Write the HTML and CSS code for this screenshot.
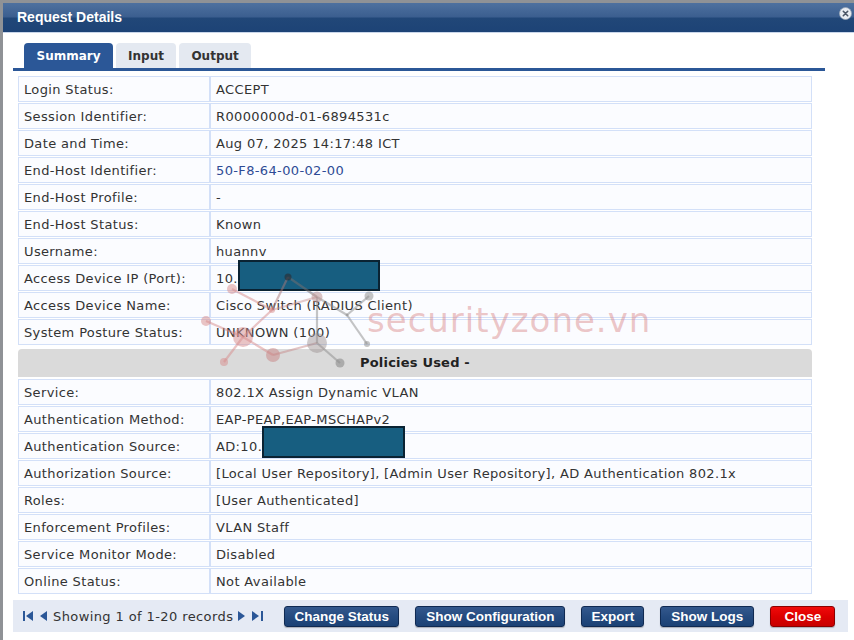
FILE: index.html
```html
<!DOCTYPE html>
<html>
<head>
<meta charset="utf-8">
<link rel="stylesheet" href="styles.css">
</head>
<body>
<div class="dialog">
  <div class="titlebar">
    <span class="title">Request Details</span>
    <svg class="close-x" width="13" height="13" viewBox="0 0 13 13"><circle cx="6.5" cy="6.5" r="6" fill="#e8ecf2" stroke="#9aa7b8" stroke-width="0.8"/><path d="M4.3 4.3 L8.7 8.7 M8.7 4.3 L4.3 8.7" stroke="#4a5566" stroke-width="1.6" stroke-linecap="round"/></svg>
  </div>
  <div class="tabs">
    <div class="tab active">Summary</div>
    <div class="tab">Input</div>
    <div class="tab">Output</div>
  </div>
  <div class="rule"></div>
  <div class="details">
    <div class="row"><div class="k">Login Status:</div><div class="v">ACCEPT</div></div>
    <div class="row"><div class="k">Session Identifier:</div><div class="v">R0000000d-01-6894531c</div></div>
    <div class="row"><div class="k">Date and Time:</div><div class="v">Aug 07, 2025 14:17:48 ICT</div></div>
    <div class="row"><div class="k">End-Host Identifier:</div><div class="v link">50-F8-64-00-02-00</div></div>
    <div class="row"><div class="k">End-Host Profile:</div><div class="v">-</div></div>
    <div class="row"><div class="k">End-Host Status:</div><div class="v">Known</div></div>
    <div class="row"><div class="k">Username:</div><div class="v">huannv</div></div>
    <div class="row"><div class="k">Access Device IP (Port):</div><div class="v">10.</div></div>
    <div class="row"><div class="k">Access Device Name:</div><div class="v">Cisco Switch (RADIUS Client)</div></div>
    <div class="row"><div class="k">System Posture Status:</div><div class="v">UNKNOWN (100)</div></div>
    <div class="section">Policies Used -</div>
    <div class="row"><div class="k">Service:</div><div class="v">802.1X Assign Dynamic VLAN</div></div>
    <div class="row"><div class="k">Authentication Method:</div><div class="v">EAP-PEAP,EAP-MSCHAPv2</div></div>
    <div class="row"><div class="k">Authentication Source:</div><div class="v">AD:10.</div></div>
    <div class="row"><div class="k">Authorization Source:</div><div class="v">[Local User Repository], [Admin User Repository], AD Authentication 802.1x</div></div>
    <div class="row"><div class="k">Roles:</div><div class="v">[User Authenticated]</div></div>
    <div class="row"><div class="k">Enforcement Profiles:</div><div class="v">VLAN Staff</div></div>
    <div class="row"><div class="k">Service Monitor Mode:</div><div class="v">Disabled</div></div>
    <div class="row"><div class="k">Online Status:</div><div class="v">Not Available</div></div>
  </div>
  <div class="footer">
    <div class="pager">
      <svg class="pg first" width="11" height="10" viewBox="0 0 11 10"><rect x="0" y="0" width="2" height="10" fill="#2b5797"/><path d="M10 0 L3 5 L10 10 Z" fill="#2b5797"/></svg>
      <svg class="pg prev" width="7" height="10" viewBox="0 0 7 10"><path d="M7 0 L0 5 L7 10 Z" fill="#2b5797"/></svg>
      <span class="pg-text">Showing 1 of 1-20 records</span>
      <svg class="pg next" width="7" height="10" viewBox="0 0 7 10"><path d="M0 0 L7 5 L0 10 Z" fill="#2b5797"/></svg>
      <svg class="pg last" width="11" height="10" viewBox="0 0 11 10"><path d="M0 0 L7 5 L0 10 Z" fill="#2b5797"/><rect x="9" y="0" width="2" height="10" fill="#2b5797"/></svg>
    </div>
    <div class="buttons">
      <button class="btn b-status">Change Status</button>
      <button class="btn b-config">Show Configuration</button>
      <button class="btn b-export">Export</button>
      <button class="btn b-logs">Show Logs</button>
      <button class="btn btn-red">Close</button>
    </div>
  </div>

  <div class="mask mask-ip"></div>
  <div class="mask mask-ad"></div>
  <svg class="wm-graph" width="200" height="130" viewBox="190 250 200 130">
    <g stroke-width="2.2" fill="none">
      <line x1="288" y1="277" x2="317" y2="297" stroke="rgba(120,110,110,0.5)"/>
      <line x1="288" y1="277" x2="272" y2="310" stroke="rgba(170,120,120,0.5)"/>
      <line x1="272" y1="310" x2="243" y2="337" stroke="rgba(215,140,140,0.5)"/>
      <line x1="232" y1="289" x2="272" y2="310" stroke="rgba(215,140,140,0.5)"/>
      <line x1="272" y1="310" x2="317" y2="297" stroke="rgba(200,140,140,0.45)"/>
      <line x1="206" y1="321" x2="243" y2="337" stroke="rgba(215,140,140,0.5)"/>
      <line x1="243" y1="337" x2="273" y2="355" stroke="rgba(215,140,140,0.5)"/>
      <line x1="243" y1="337" x2="224" y2="362" stroke="rgba(215,140,140,0.5)"/>
      <line x1="273" y1="355" x2="317" y2="343" stroke="rgba(200,140,140,0.5)"/>
      <line x1="317" y1="297" x2="317" y2="343" stroke="rgba(140,140,140,0.5)"/>
      <line x1="317" y1="343" x2="340" y2="363" stroke="rgba(140,140,140,0.5)"/>
      <line x1="317" y1="297" x2="347" y2="315" stroke="rgba(140,140,140,0.5)"/>
      <line x1="347" y1="315" x2="369" y2="296" stroke="rgba(140,140,140,0.5)"/>
      <line x1="347" y1="315" x2="367" y2="344" stroke="rgba(140,140,140,0.5)"/>
    </g>
    <g>
      <circle cx="288" cy="277" r="3.5" fill="rgba(40,50,60,0.7)"/>
      <circle cx="232" cy="289" r="5" fill="rgba(215,140,140,0.5)"/>
      <circle cx="317" cy="297" r="5.5" fill="rgba(190,150,150,0.55)"/>
      <circle cx="369" cy="296" r="4.5" fill="rgba(140,140,140,0.5)"/>
      <circle cx="206" cy="321" r="5" fill="rgba(215,140,140,0.5)"/>
      <circle cx="272" cy="310" r="3" fill="rgba(215,140,140,0.5)"/>
      <circle cx="347" cy="315" r="1.5" fill="rgba(140,140,140,0.5)"/>
      <circle cx="243" cy="337" r="10" fill="rgba(215,140,140,0.5)"/>
      <circle cx="317" cy="343" r="10" fill="rgba(150,140,140,0.45)"/>
      <circle cx="273" cy="355" r="7" fill="rgba(200,130,130,0.5)"/>
      <circle cx="340" cy="363" r="4.5" fill="rgba(140,140,140,0.6)"/>
      <circle cx="224" cy="362" r="4" fill="rgba(215,140,140,0.5)"/>
      <circle cx="367" cy="344" r="3" fill="rgba(140,140,140,0.5)"/>
    </g>
  </svg>
  <div class="wm-text">securityzone.vn</div>
</div>
</body>
</html>
```

FILE: styles.css
```css
html, body {
  margin: 0;
  padding: 0;
}
body {
  background: #8f9296;
  width: 854px;
  height: 640px;
  overflow: hidden;
  font-family: "DejaVu Sans", Verdana, sans-serif;
  font-size: 13px;
  color: #333;
}
.dialog {
  position: relative;
  margin: 3px 0 0 3px;
  width: 851px;
  height: 637px;
  background: #fff;
  overflow: hidden;
}
.titlebar {
  height: 29px;
  display: flex;
  align-items: center;
  justify-content: space-between;
  padding: 0 2px 0 14px;
  background: linear-gradient(#4e719f 0%, #3b5e8f 48%, #214778 52%, #1d4376 100%);
  border-bottom: 1px solid #c9d6ea;
}
.title {
  font-family: "Liberation Sans", Arial, sans-serif;
  font-weight: bold;
  font-size: 14px;
  color: #fff;
  margin-top: -1px;
}
.close-x {
  margin-top: -8px;
}
.tabs {
  display: flex;
  gap: 2.5px;
  margin: 10px 0 0 21px;
  height: 25px;
}
.tab {
  height: 25px;
  line-height: 27px;
  padding: 0 12.5px;
  font-size: 12px;
  font-weight: bold;
  color: #333;
  background: #e4e9f1;
  border-radius: 4px 4px 0 0;
  box-sizing: border-box;
}
.tab.active {
  background: #2b5797;
  color: #fff;
}
.rule {
  height: 3px;
  background: #2b5797;
  margin: 0 29px 0 10px;
}
.details {
  margin: 5px 0 0 15px;
  width: 794px;
}
.row {
  display: grid;
  grid-template-columns: 192px 1fr;
  margin-bottom: 1px;
}
.k, .v {
  height: 26px;
  line-height: 25px;
  box-sizing: border-box;
  border: 1px solid #d3e0f8;
  background: #fbfcff;
  padding: 0 5px;
  white-space: nowrap;
  letter-spacing: 0.36px;
}
.v.link {
  color: #2e4b95;
}
.section {
  margin: 4px 0 2px 0;
  height: 28px;
  line-height: 28px;
  text-align: center;
  background: #dadada;
  border-radius: 4px 4px 0 0;
  font-weight: bold;
  color: #222;
  letter-spacing: 0.2px;
}
.footer {
  margin: 6px 0 0 10px;
  width: 835px;
  height: 32px;
  background: #e5eaf4;
  display: flex;
  align-items: center;
  box-sizing: border-box;
  padding-left: 10px;
}
.pager {
  display: flex;
  align-items: center;
}
.pg.prev { margin-left: 6px; }
.pg-text { margin: 0 5px 0 6px; color: #333; letter-spacing: 0.4px; }
.pg.last { margin-left: 7px; }
.buttons {
  display: flex;
  align-items: center;
  margin-left: 21px;
  gap: 16px;
}
.btn {
  height: 21px;
  padding: 0;
  box-sizing: border-box;
  border: 1px solid #102a52;
  border-radius: 3px;
  background: linear-gradient(#34598d 0%, #254b80 50%, #1c4275 100%);
  color: #fff;
  font-family: "Liberation Sans", Arial, sans-serif;
  font-weight: bold;
  font-size: 13.5px;
  line-height: 19px;
  white-space: nowrap;
  box-shadow: 0 1px 1px rgba(0,0,0,0.25);
}
.b-status { width: 115px; }
.b-config { width: 150px; }
.b-export { width: 63px; }
.b-logs { width: 94px; }
.btn-red {
  background: linear-gradient(#f00a0a 0%, #dc0000 50%, #c80000 100%);
  border-color: #8c0000;
  width: 65px;
}
.mask {
  position: absolute;
  background: #175e80;
  border: 2px solid #0a2333;
  box-sizing: border-box;
}
.mask-ip {
  left: 235px;
  top: 257px;
  width: 142px;
  height: 31px;
}
.mask-ad {
  left: 259px;
  top: 423px;
  width: 143px;
  height: 32px;
}
.wm-graph {
  position: absolute;
  left: 187px;
  top: 247px;
  pointer-events: none;
}
.wm-text {
  position: absolute;
  left: 364px;
  top: 297px;
  font-family: "DejaVu Sans", sans-serif;
  font-size: 34px;
  letter-spacing: 1px;
  color: rgba(214, 120, 120, 0.42);
  pointer-events: none;
  white-space: nowrap;
}
```
